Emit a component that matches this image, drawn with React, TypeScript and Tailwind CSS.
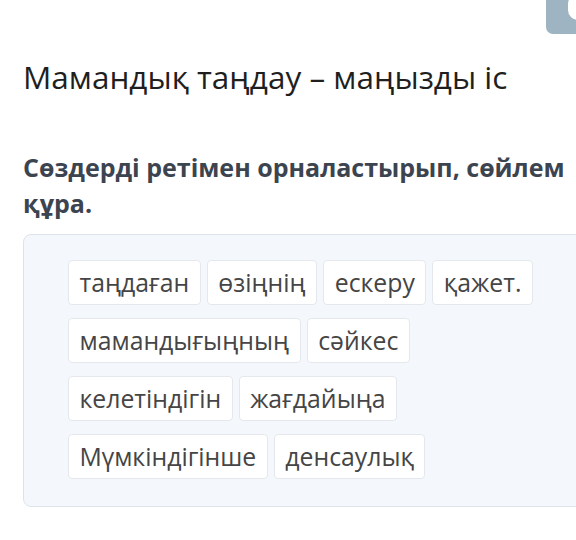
import React from 'react';

const words = [
  'таңдаған',
  'өзіңнің',
  'ескеру',
  'қажет.',
  'мамандығыңның',
  'сәйкес',
  'келетіндігін',
  'жағдайыңа',
  'Мүмкіндігінше',
  'денсаулық',
];

const rows = [words.slice(0, 4), words.slice(4, 6), words.slice(6, 8), words.slice(8, 10)];

export default function App() {
  return (
    <div className="relative w-[576px] h-[540px] overflow-hidden bg-white" style={{ fontFamily: '"Open Sans", sans-serif' }}>
      <div className="absolute top-0 left-[546px] w-[40px] h-[34px] bg-[#9fb4c3] rounded-bl-[7px] overflow-hidden">
        <div className="absolute -top-[6px] left-[22px] w-[20px] h-[26px] bg-white rounded-full" />
      </div>

      <div className="pl-[23px] pt-[55px]">
        <h1 className="text-[31.5px] leading-[44px] text-[#1f1f1f] whitespace-nowrap">Мамандық таңдау – маңызды іс</h1>

        <h2 className="mt-[50px] text-[25px] leading-[36px] font-bold text-[#3c4450] w-[560px]">
          Сөздерді ретімен орналастырып, сөйлем құра.
        </h2>

        <div className="mt-[13px] w-[580px] rounded-[8px] border border-[#dde3ea] bg-[#f4f8fc] pl-[44px] pt-[25px] pb-[27px] flex flex-col gap-[13px]">
          {rows.map((row, i) => (
            <div key={i} className="flex gap-[6px]">
              {row.map((w) => (
                <div
                  key={w}
                  className="h-[45px] px-[10.5px] flex items-center rounded-[4px] border border-[#e4e8ec] bg-white text-[24.8px] text-[#454545]"
                >
                  {w}
                </div>
              ))}
            </div>
          ))}
        </div>
      </div>
    </div>
  );
}
